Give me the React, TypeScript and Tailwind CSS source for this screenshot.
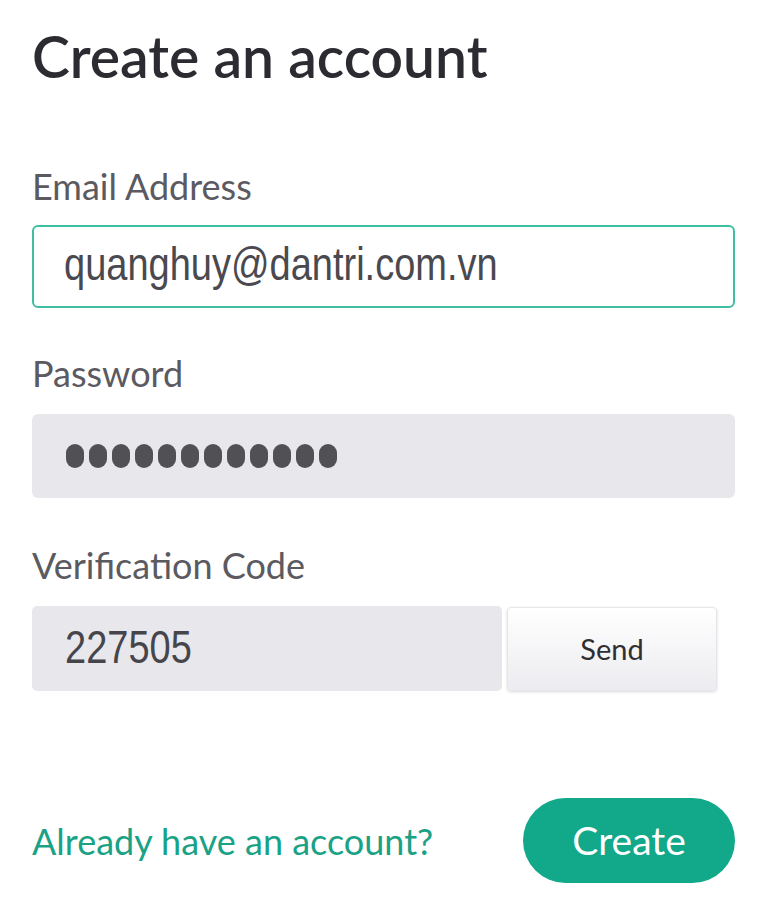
import React from "react";

const ui = { fontFamily: "Lato, 'Noto Sans', sans-serif" };
const field = { fontFamily: "'Liberation Sans', Arial, sans-serif" };

export default function App() {
  return (
    <div className="min-h-[912px] w-[770px] bg-white px-8 pt-[24px]" style={ui}>
      <h1 className="text-[57px] font-semibold leading-[64px] text-[#2c2b31]">Create an account</h1>

      <form className="mt-[78px] flex flex-col" onSubmit={(e) => e.preventDefault()}>
        <label className="text-[36px] leading-[40px] text-[#5b5a61]">Email Address</label>
        <div
          className="mt-[19px] flex h-[83px] w-[703px] items-center rounded-[6px] border-2 border-[#3fbfa2] bg-white pl-[30px] text-[38px] text-[#4a494f]"
          style={field}
        >
          <span className="inline-block -translate-y-[2px] scale-y-[1.2]">quanghuy@dantri.com.vn</span>
        </div>

        <label className="mt-[45px] text-[36px] leading-[40px] text-[#5b5a61]">Password</label>
        <div className="mt-[21px] flex h-[84px] w-[703px] items-center gap-[5px] rounded-[6px] bg-[#e8e7eb] pl-[34px]">
          {Array.from({ length: 12 }).map((_, i) => (
            <span key={i} className="h-[24px] w-[18px] rounded-full bg-[#505055]" />
          ))}
        </div>

        <label className="mt-[47px] text-[36px] leading-[40px] text-[#5b5a61]">Verification Code</label>
        <div className="mt-[21px] flex items-center gap-[5px]">
          <div
            className="flex h-[85px] w-[470px] items-center rounded-[5px] bg-[#e8e7eb] pl-[33px] text-[38px] text-[#46454b]"
            style={field}
          >
            <span className="inline-block scale-y-[1.2]">227505</span>
          </div>
          <button
            type="button"
            className="h-[84px] w-[210px] rounded-[4px] border border-[#e6e5ea] bg-gradient-to-b from-white to-[#ecebef] text-[29px] text-[#2f2e33] shadow-[0_1px_3px_rgba(0,0,0,0.15)]"
          >
            Send
          </button>
        </div>

        <div className="mt-[107px] flex w-[703px] items-center justify-between">
          <a href="#" className="text-[36px] text-[#1aa286]">Already have an account?</a>
          <button
            type="submit"
            className="h-[85px] w-[212px] rounded-full bg-[#12a88a] text-[39px] text-white"
          >
            Create
          </button>
        </div>
      </form>
    </div>
  );
}
